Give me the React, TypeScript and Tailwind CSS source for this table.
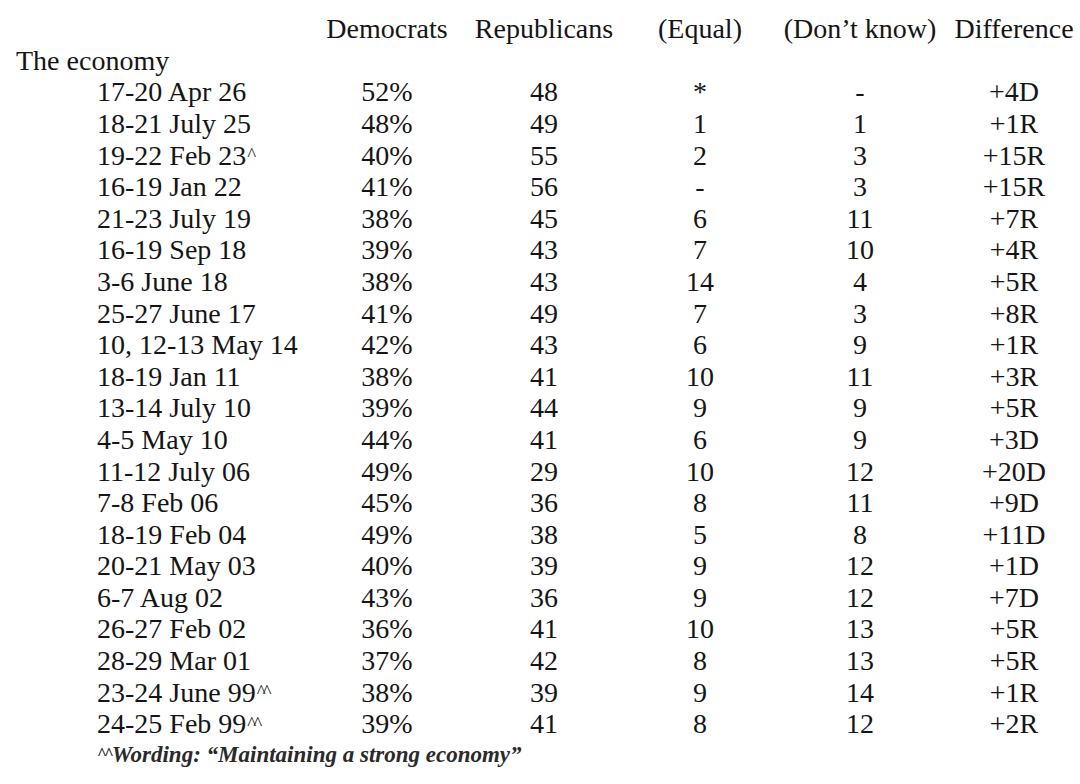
const COLS = "grid grid-cols-[330px_114px_200px_112px_208px_100px]";

type Row = { date: string; mark?: string; d: string; r: string; eq: string; dk: string; diff: string };

const ROWS: Row[] = [
  { date: "17-20 Apr 26", d: "52%", r: "48", eq: "*", dk: "-", diff: "+4D" },
  { date: "18-21 July 25", d: "48%", r: "49", eq: "1", dk: "1", diff: "+1R" },
  { date: "19-22 Feb 23", mark: "^", d: "40%", r: "55", eq: "2", dk: "3", diff: "+15R" },
  { date: "16-19 Jan 22", d: "41%", r: "56", eq: "-", dk: "3", diff: "+15R" },
  { date: "21-23 July 19", d: "38%", r: "45", eq: "6", dk: "11", diff: "+7R" },
  { date: "16-19 Sep 18", d: "39%", r: "43", eq: "7", dk: "10", diff: "+4R" },
  { date: "3-6 June 18", d: "38%", r: "43", eq: "14", dk: "4", diff: "+5R" },
  { date: "25-27 June 17", d: "41%", r: "49", eq: "7", dk: "3", diff: "+8R" },
  { date: "10, 12-13 May 14", d: "42%", r: "43", eq: "6", dk: "9", diff: "+1R" },
  { date: "18-19 Jan 11", d: "38%", r: "41", eq: "10", dk: "11", diff: "+3R" },
  { date: "13-14 July 10", d: "39%", r: "44", eq: "9", dk: "9", diff: "+5R" },
  { date: "4-5 May 10", d: "44%", r: "41", eq: "6", dk: "9", diff: "+3D" },
  { date: "11-12 July 06", d: "49%", r: "29", eq: "10", dk: "12", diff: "+20D" },
  { date: "7-8 Feb 06", d: "45%", r: "36", eq: "8", dk: "11", diff: "+9D" },
  { date: "18-19 Feb 04", d: "49%", r: "38", eq: "5", dk: "8", diff: "+11D" },
  { date: "20-21 May 03", d: "40%", r: "39", eq: "9", dk: "12", diff: "+1D" },
  { date: "6-7 Aug 02", d: "43%", r: "36", eq: "9", dk: "12", diff: "+7D" },
  { date: "26-27 Feb 02", d: "36%", r: "41", eq: "10", dk: "13", diff: "+5R" },
  { date: "28-29 Mar 01", d: "37%", r: "42", eq: "8", dk: "13", diff: "+5R" },
  { date: "23-24 June 99", mark: "^^", d: "38%", r: "39", eq: "9", dk: "14", diff: "+1R" },
  { date: "24-25 Feb 99", mark: "^^", d: "39%", r: "41", eq: "8", dk: "12", diff: "+2R" },
];

const Cell = ({ children }: { children: React.ReactNode }) => (
  <div className="flex items-center justify-center whitespace-nowrap">{children}</div>
);

export default function App() {
  return (
    <div
      className="h-[784px] w-[1080px] overflow-hidden bg-white pt-[13px] text-[28px] leading-none text-[#151515]"
      style={{ fontFamily: '"Liberation Serif", "Times New Roman", serif' }}
    >
      <div className={`${COLS} h-[32px]`}>
        <div />
        <Cell>Democrats</Cell>
        <Cell>Republicans</Cell>
        <Cell>(Equal)</Cell>
        <Cell>(Don’t know)</Cell>
        <Cell>Difference</Cell>
      </div>
      <div className="flex h-[31.6px] items-center pl-4">The economy</div>
      {ROWS.map((row) => (
        <div key={row.date} className={`${COLS} h-[31.6px]`}>
          <div className="flex items-center whitespace-nowrap pl-[97px]">
            {row.date}
            {row.mark && (
              <span className="ml-[1px] -translate-y-[1px] text-[19px] tracking-[-3px]">{row.mark}</span>
            )}
          </div>
          <Cell>{row.d}</Cell>
          <Cell>{row.r}</Cell>
          <Cell>{row.eq}</Cell>
          <Cell>{row.dk}</Cell>
          <Cell>{row.diff}</Cell>
        </div>
      ))}
      <div className="flex h-[28px] items-center pl-[97px] text-[23px] font-semibold italic text-[#2a2a2a]">
        <span className="mr-[1px] -translate-y-[1px] text-[17px] not-italic tracking-[-3px]">^^</span>
        Wording: “Maintaining a strong economy”
      </div>
    </div>
  );
}
